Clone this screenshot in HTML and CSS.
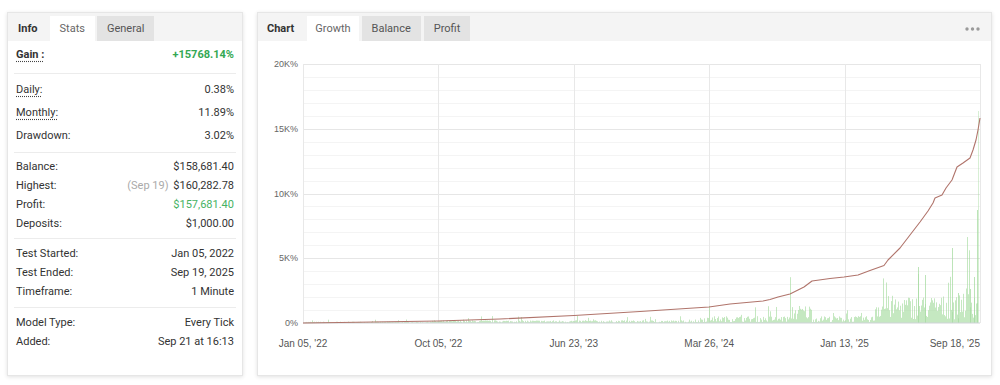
FILE: index.html
```html
<html>
    <head>
        <title>System Stats</title>
        <link rel="stylesheet" href="styles.css">
        <script src="script.js"></script>
    </head>

    <body>
        <div class="layout">
            <!-- stats panel -->
            <div class="panel stats-panel">
                <div class="panel-head">
                    <span class="tab title">Info</span>
                    <span class="tab active">Stats</span>
                    <span class="tab muted">General</span>
                </div>
                <div class="group gain">
                    <div class="row"><span class="hint">Gain :</span><span class="green">+15768.14%</span></div>
                </div>
                <div class="group wide">
                    <div class="row"><span class="hint">Daily:</span><span>0.38%</span></div>
                    <div class="row"><span class="hint">Monthly:</span><span>11.89%</span></div>
                    <div class="row"><span>Drawdown:</span><span>3.02%</span></div>
                </div>
                <div class="group">
                    <div class="row"><span>Balance:</span><span>$158,681.40</span></div>
                    <div class="row"><span>Highest:</span><span><span class="faint">(Sep 19)</span> $160,282.78</span></div>
                    <div class="row"><span>Profit:</span><span class="profit">$157,681.40</span></div>
                    <div class="row"><span>Deposits:</span><span>$1,000.00</span></div>
                </div>
                <div class="group">
                    <div class="row"><span>Test Started:</span><span>Jan 05, 2022</span></div>
                    <div class="row"><span>Test Ended:</span><span>Sep 19, 2025</span></div>
                    <div class="row"><span>Timeframe:</span><span>1 Minute</span></div>
                </div>
                <div class="group last">
                    <div class="row"><span>Model Type:</span><span>Every Tick</span></div>
                    <div class="row"><span>Added:</span><span>Sep 21 at 16:13</span></div>
                </div>
            </div>

            <!-- chart panel -->
            <div class="panel chart-panel">
                <div class="panel-head">
                    <span class="tab title">Chart</span>
                    <span class="tab active">Growth</span>
                    <span class="tab muted">Balance</span>
                    <span class="tab muted">Profit</span>
                    <svg class="more" width="15" height="4" viewBox="0 0 15 4">
                        <circle cx="2" cy="2" r="1.7"/>
                        <circle cx="7.5" cy="2" r="1.7"/>
                        <circle cx="13" cy="2" r="1.7"/>
                    </svg>
                </div>
                <svg id="growthChart" class="chart" width="733" height="334" viewBox="0 0 733 334">
                    <g id="grid"></g>
                    <g id="bars"></g>
                    <line class="axis" x1="45" y1="282" x2="722" y2="282"/>
                    <polyline class="growth-line" points="45,282 82,281.5 180,280 242,278 316,274.5 382,270.5 451,266 472,263 505,260 512,258.5 520,256 532,253 540,249 546,246 554,240 572,237.5 586,236 600,234 612,229.5 626,224.5 630,219 642,207 652,194 662,181 670,170 675,162 677,157 684,154 688,147 694,139 699,126 705,122 712,117 715,109 718,99 720,89 722,77"/>
                    <g class="axis-y">
                        <text x="40" y="26">20K%</text>
                        <text x="40" y="91">15K%</text>
                        <text x="40" y="156">10K%</text>
                        <text x="40" y="220">5K%</text>
                        <text x="40" y="285">0%</text>
                    </g>
                    <g class="axis-x">
                        <text x="45" y="306">Jan 05, '22</text>
                        <text x="180.4" y="306">Oct 05, '22</text>
                        <text x="315.8" y="306">Jun 23, '23</text>
                        <text x="451.2" y="306">Mar 26, '24</text>
                        <text x="586.6" y="306">Jan 13, '25</text>
                        <text x="722" y="306" class="end">Sep 18, '25</text>
                    </g>
                </svg>
            </div>
        </div>
    </body>
</html>
```

FILE: styles.css
```css
/* Page */
body {
    margin: 0;
    padding: 12px 8px 0 7px;
    font-family: Roboto, "Liberation Sans", sans-serif;
    font-size: 11px;
    color: #333;
    background-color: #fff;
}

/* Two panels side by side */
.layout {
    display: flex;
    gap: 14px;
}

.panel {
    height: 364px;
    box-sizing: border-box;
    background-color: #fff;
    border: 1px solid #e6e6e6;
    box-shadow: 0 1px 4px rgba(0, 0, 0, 0.12);
}

.stats-panel {
    width: 236px;
}

.chart-panel {
    flex: 1;
}

/* Tab strip on top of each panel */
.panel-head {
    display: flex;
    align-items: flex-end;
    gap: 2px;
    height: 28px;
    padding-top: 3px;
    box-sizing: border-box;
    background-color: #f4f4f4;
}

.chart-panel .panel-head {
    gap: 3px;
}

.tab {
    height: 25px;
    line-height: 25px;
    padding: 0 10px;
    color: #555;
}

.chart-panel .tab.active {
    padding: 0 8px;
}

.chart-panel .tab.title {
    padding: 0 10px 0 9px;
}

.tab.title {
    font-weight: bold;
    color: #333;
}

.tab.active {
    background-color: #fff;
    color: #666;
}

.tab.muted {
    background-color: #e3e3e3;
}

.more {
    margin-left: auto;
    margin-right: 11px;
    align-self: center;
    fill: #9a9a9a;
}

/* Stats rows */
.group {
    margin: 0 6px;
    padding: 4px 2px 5px;
    border-bottom: 1px solid #ececec;
}

.group.gain {
    padding: 0 2px 4px;
    font-weight: bold;
}

.group.gain .row {
    line-height: 28px;
}

.group.wide .row {
    line-height: 23px;
}

.group:nth-child(5) {
    padding: 5px 2px 6px;
}

.group.last {
    padding: 5px 2px;
    border-bottom: none;
}

.row {
    display: flex;
    justify-content: space-between;
    line-height: 19px;
}

.hint {
    text-decoration: underline dotted #444;
    text-underline-offset: 3px;
}

.green {
    color: #34a853;
}

.profit {
    color: #46b263;
}

.faint {
    color: #aaa;
    margin-right: 2px;
}

/* Growth chart */
.chart {
    display: block;
}

.axis {
    stroke: #cfd3d8;
    stroke-width: 1;
}

.growth-line {
    fill: none;
    stroke: #b0746b;
    stroke-width: 1.1;
    stroke-linejoin: round;
}

.axis-y text {
    font-family: "Liberation Sans", Arial, sans-serif;
    font-size: 9px;
    fill: #666;
    text-anchor: end;
}

.axis-x text {
    font-family: "Liberation Sans", Arial, sans-serif;
    font-size: 10px;
    fill: #555;
    text-anchor: middle;
}

.axis-x text.end {
    text-anchor: end;
}
```

FILE: script.js
```js
var NS = 'http://www.w3.org/2000/svg';

//plot area inside the chart svg
var plot = { left: 45, right: 722, top: 23, bottom: 282 };

function addLine(parent, x1, y1, x2, y2, color, opacity) {
    var line = document.createElementNS(NS, 'line');
    line.setAttribute('x1', x1);
    line.setAttribute('y1', y1);
    line.setAttribute('x2', x2);
    line.setAttribute('y2', y2);
    line.setAttribute('stroke', color);
    line.setAttribute('stroke-width', 1);
    if (opacity) {
        line.setAttribute('stroke-opacity', opacity);
    }
    parent.appendChild(line);
}

//simple seeded random so the bars are always the same
var seed = 7;
function rnd() {
    seed = (seed * 16807) % 2147483647;
    return seed / 2147483647;
}

//draw grid lines
function drawGrid() {
    var grid = document.getElementById('grid');
    var step = (plot.bottom - plot.top) / 20;
    for (var i = 0; i < 20; i++) {
        var y = Math.round(plot.top + i * step) + 0.5;
        addLine(grid, plot.left, y, plot.right, y, i % 5 === 0 ? '#e6e6e6' : '#f4f4f4');
    }
    var xStep = (plot.right - plot.left) / 5;
    for (var j = 0; j <= 5; j++) {
        var x = Math.round(plot.left + j * xStep) + 0.5;
        addLine(grid, x, plot.top, x, plot.bottom, '#e8e8e8');
    }
}

//amplitude of the daily profit bars along the time axis
function amplitude(x) {
    var p = x + 258;
    if (p < 430) return 1.2;
    if (p < 700) return 2.4;
    if (p < 790) return 6;
    if (p < 812) return 16;
    if (p < 875) return 6;
    if (p < 960) return 24;
    return 32;
}

//draw daily profit bars
function drawBars() {
    var bars = document.getElementById('bars');
    for (var x = plot.left + 1; x < plot.right - 2; x++) {
        var h = amplitude(x) * (0.15 + rnd());
        if (rnd() < 0.07) {
            h = h * 2.6;
        }
        addLine(bars, x + 0.5, plot.bottom, x + 0.5, plot.bottom - h, '#a6dba0', 0.65);
    }
    //a few tall spikes near the end
    var spikes = [[660, 56], [667, 48], [694, 75], [700, 30], [712, 34], [716, 46], [719, 113]];
    for (var k = 0; k < spikes.length; k++) {
        addLine(bars, spikes[k][0] + 0.5, plot.bottom, spikes[k][0] + 0.5, plot.bottom - spikes[k][1], '#a6dba0', 0.75);
    }
    addLine(bars, 720.5, plot.bottom, 720.5, plot.bottom - 212, '#a6dba0', 0.45);
}

document.addEventListener('DOMContentLoaded', function () {
    drawGrid();
    drawBars();
});
```
